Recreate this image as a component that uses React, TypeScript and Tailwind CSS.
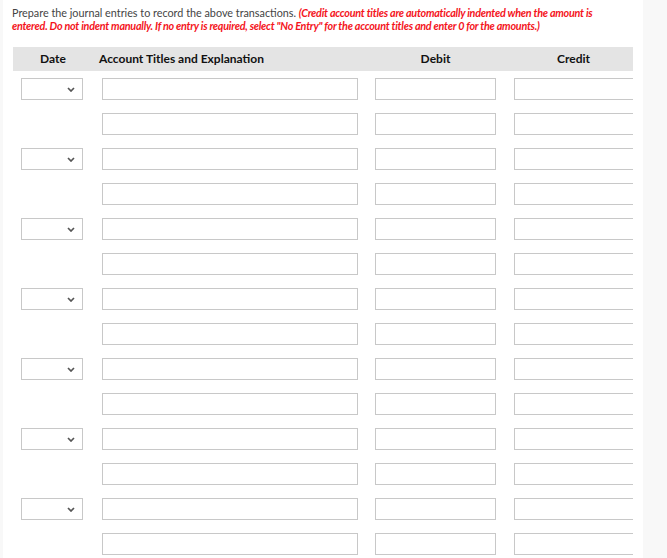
const rows = Array.from({ length: 14 }, (_, i) => i);

const Chevron = () => (
  <svg width="8" height="5" viewBox="0 0 8 5" className="absolute right-[7px] top-[8px]">
    <polyline points="1,1 4,4 7,1" fill="none" stroke="#555" strokeWidth="1.7" />
  </svg>
);

export default function App() {
  return (
    <div className="w-full h-[558px] bg-[#f8f8f8] overflow-hidden" style={{ fontFamily: "Lato, 'Open Sans', sans-serif" }}>
      <div className="ml-[3px] w-[640px] h-full bg-white">
        <p className="pl-[9px] pt-[6px] text-[10.8px] leading-[13px] text-[#444] pr-2">
          Prepare the journal entries to record the above transactions.{" "}
          <span className="text-[#f4141c] italic font-bold tracking-[-0.25px]">
            (Credit account titles are automatically indented when the amount is
            <br />
            entered. Do not indent manually. If no entry is required, select "No Entry" for the account titles and enter 0 for the amounts.)
          </span>
        </p>

        <div className="ml-[10px] mt-[15px] w-[620px] overflow-hidden">
          {/* header */}
          <div className="flex h-[24px] items-center bg-[#e4e4e4] text-[12px] font-bold text-[#111]">
            <div className="w-[80px] text-center">Date</div>
            <div className="w-[282px] pl-[6px]">Account Titles and Explanation</div>
            <div className="w-[121px] text-center">Debit</div>
            <div className="ml-[18px] w-[119px] text-center">Credit</div>
          </div>

          <div className="mt-[7px] flex flex-col gap-[13px]">
            {rows.map((i) => (
              <div key={i} className="flex h-[22px] shrink-0">
                <div className="w-[89px] shrink-0 pl-[8px]">
                  {i % 2 === 0 && (
                    <div className="relative w-[62px] h-[22px] border border-[#c8c8c8] bg-white">
                      <Chevron />
                    </div>
                  )}
                </div>
                <div className="w-[256px] shrink-0 border border-[#c8c8c8] bg-white" />
                <div className="ml-[17px] w-[121px] shrink-0 border border-[#c8c8c8] bg-white" />
                <div className="ml-[18px] w-[121px] shrink-0 border border-[#c8c8c8] bg-white" />
              </div>
            ))}
          </div>
        </div>
      </div>
    </div>
  );
}
